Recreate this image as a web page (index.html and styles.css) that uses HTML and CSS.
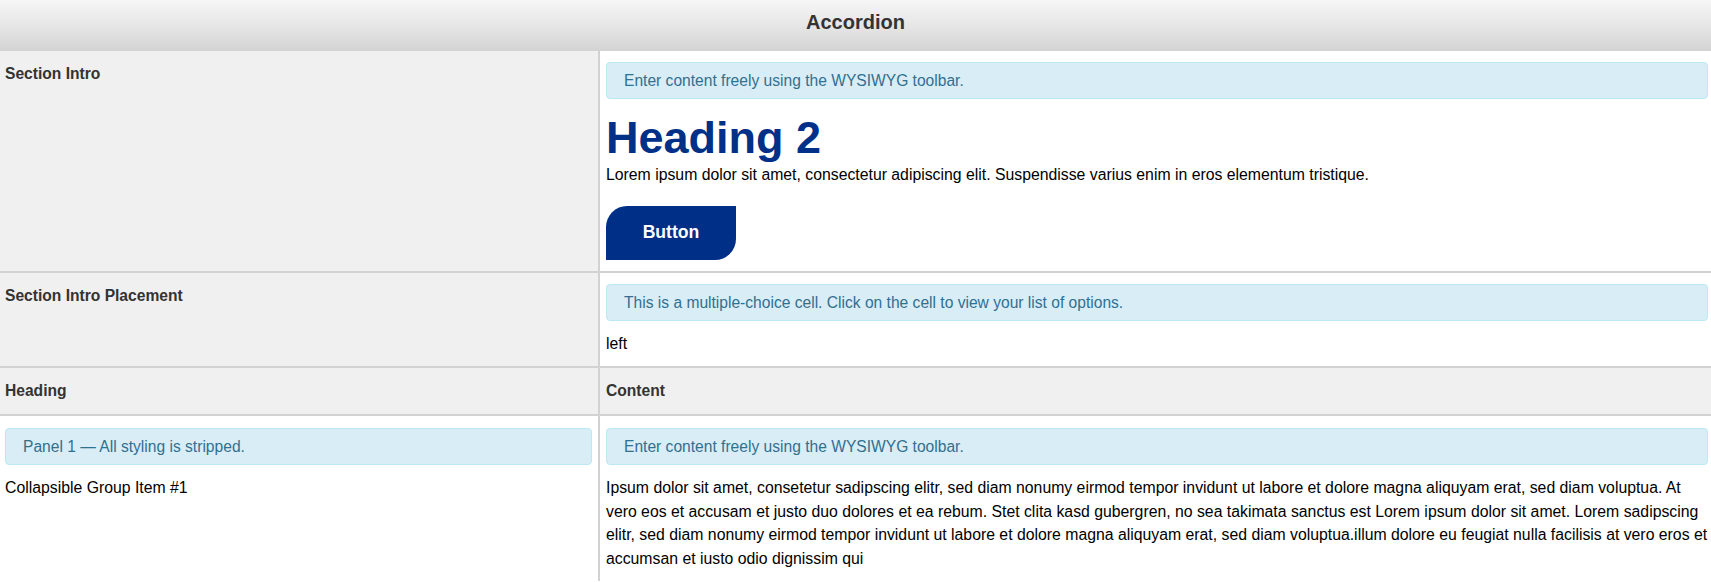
FILE: index.html
```html
<!DOCTYPE html>
<html lang="en">
<head>
<meta charset="utf-8">
<title>Accordion</title>
<link rel="stylesheet" href="styles.css">
</head>
<body>
<header class="page-title">Accordion</header>
<div class="grid">
  <div class="cell label">Section Intro</div>
  <div class="cell content">
    <div class="alert">Enter content freely using the WYSIWYG toolbar.</div>
    <h2 class="heading">Heading 2</h2>
    <p class="text">Lorem ipsum dolor sit amet, consectetur adipiscing elit. Suspendisse varius enim in eros elementum tristique.</p>
    <a class="btn">Button</a>
  </div>

  <div class="cell label">Section Intro Placement</div>
  <div class="cell content">
    <div class="alert">This is a multiple-choice cell. Click on the cell to view your list of options.</div>
    <p class="text">left</p>
  </div>

  <div class="cell label head">Heading</div>
  <div class="cell label head right">Content</div>

  <div class="cell plain item">
    <div class="alert">Panel 1 — All styling is stripped.</div>
    <p class="text">Collapsible Group Item #1</p>
  </div>
  <div class="cell content item">
    <div class="alert">Enter content freely using the WYSIWYG toolbar.</div>
    <p class="text">Ipsum dolor sit amet, consetetur sadipscing elitr, sed diam nonumy eirmod tempor invidunt ut labore et dolore magna aliquyam erat, sed diam voluptua. At vero eos et accusam et justo duo dolores et ea rebum. Stet clita kasd gubergren, no sea takimata sanctus est Lorem ipsum dolor sit amet. Lorem sadipscing elitr, sed diam nonumy eirmod tempor invidunt ut labore et dolore magna aliquyam erat, sed diam voluptua.illum dolore eu feugiat nulla facilisis at vero eros et accumsan et iusto odio dignissim qui</p>
  </div>
</div>
</body>
</html>
```
FILE: styles.css
```css
html, body {
  margin: 0;
  padding: 0;
  overflow: hidden;
  background: #fff;
}
body {
  font-family: "Liberation Sans", Arial, sans-serif;
  font-size: 15.6px;
  line-height: 23.4px;
  color: #000;
}
.page-title {
  height: 51px;
  box-sizing: border-box;
  padding-top: 10px;
  text-align: center;
  font-size: 20px;
  line-height: 24px;
  font-weight: bold;
  color: #333;
  background: linear-gradient(to bottom, #f6f6f6 0%, #e6e6e6 50%, #d3d3d3 100%);
}
.grid {
  display: grid;
  grid-template-columns: 598px 1fr;
  gap: 2px;
  background: #d2d2d2;
}
.cell {
  min-width: 0;
}
.label {
  background: #f0f0f0;
  padding: 11px 5px;
  font-weight: bold;
  color: #333;
  line-height: 24px;
}
.label.right {
  padding-left: 6px;
}
.content {
  background: #fff;
  padding: 11px 3px 11px 6px;
}
.plain {
  background: #fff;
  padding: 11px 6px 11px 5px;
}
.item {
  padding-top: 12px;
}
.alert {
  background: #d9edf7;
  border: 1px solid #bce8f1;
  border-radius: 4px;
  color: #31708f;
  padding: 5.8px 17px;
  margin-bottom: 11px;
}
.heading {
  margin: 14px 0 0;
  font-size: 45px;
  line-height: 49.5px;
  font-weight: bold;
  color: #003087;
}
.text {
  margin: 0;
  font-size: 15.8px;
}
.btn {
  display: flex;
  align-items: center;
  justify-content: center;
  width: 130px;
  height: 54px;
  margin-top: 20px;
  background: #002f87;
  color: #fff;
  font-weight: bold;
  font-size: 17.6px;
  border-radius: 21px 0 21px 0;
}
```
